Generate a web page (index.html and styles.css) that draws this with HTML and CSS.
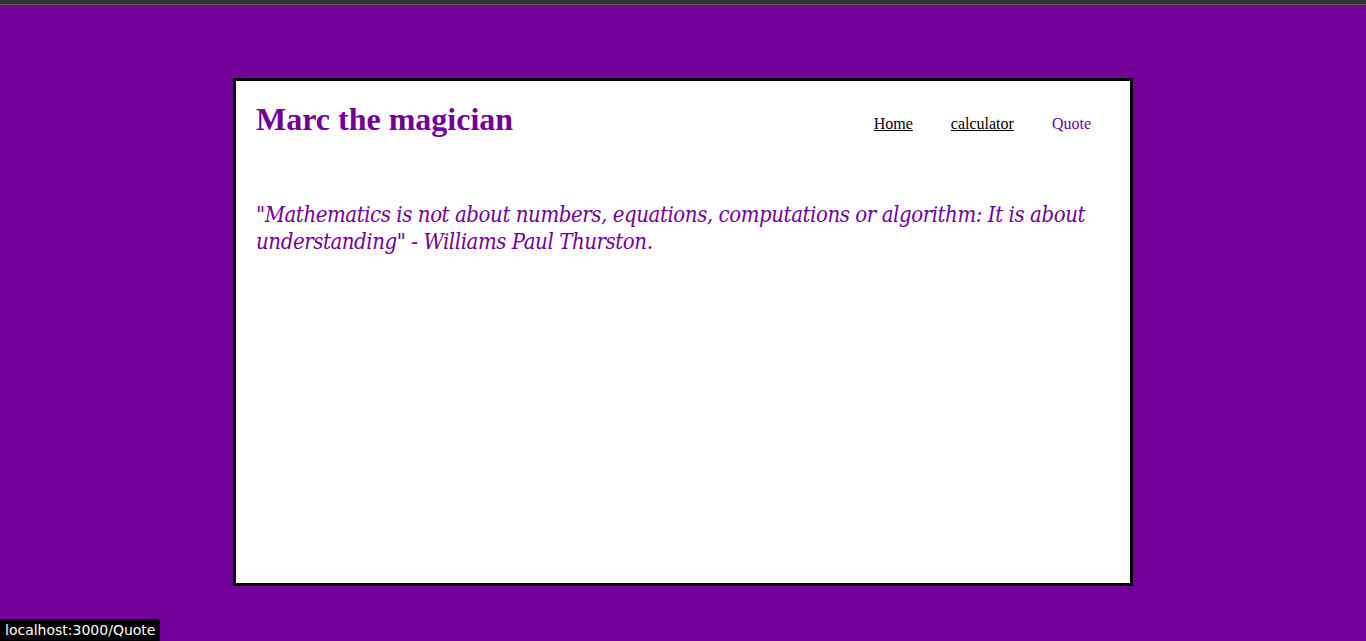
FILE: index.html
```html
<!DOCTYPE html>
<html>
<head>
<meta charset="utf-8">
<link rel="stylesheet" href="styles.css">
</head>
<body>
<div class="topbar"></div>
<main class="card">
  <header class="header">
    <h1 class="title">Marc the magician</h1>
    <nav class="nav">
      <a class="nav-link" href="#">Home</a>
      <a class="nav-link" href="#">calculator</a>
      <a class="nav-link active" href="#">Quote</a>
    </nav>
  </header>
  <p class="quote">"Mathematics is not about numbers, equations, computations or algorithm: It is about understanding" - Williams Paul Thurston.</p>
</main>
<div class="status">localhost:3000/Quote</div>
</body>
</html>
```
FILE: styles.css
```css
html, body {
  margin: 0;
  padding: 0;
}
body {
  background: #720098;
  height: 641px;
  overflow: hidden;
  font-family: "Liberation Serif", serif;
}
.topbar {
  height: 4px;
  background: #323232;
  border-bottom: 1px solid #5a5a5a;
}
.card {
  box-sizing: border-box;
  width: 900px;
  height: 508px;
  margin: 73px auto 0;
  background: #fff;
  border: 3px solid #000;
  padding: 18px 20px;
}
.header {
  display: flex;
  justify-content: space-between;
  align-items: flex-start;
}
.title {
  margin: 0;
  font-size: 32px;
  font-weight: bold;
  color: #720098;
  line-height: 40px;
}
.nav {
  display: flex;
  gap: 38px;
  padding-top: 16px;
  padding-right: 19px;
  font-size: 16px;
}
.nav-link {
  color: #000;
  text-decoration: underline;
}
.nav-link.active {
  color: #720098;
  text-decoration: none;
}
.quote {
  margin: 62px 0 0;
  font-family: "DejaVu Serif", serif;
  font-stretch: condensed;
  font-style: italic;
  font-size: 22px;
  letter-spacing: -0.43px;
  line-height: 27px;
  color: #720098;
}
.status {
  position: fixed;
  left: 0;
  bottom: 0;
  background: #000;
  color: #fff;
  font-family: "DejaVu Sans", sans-serif;
  font-size: 14px;
  line-height: 22px;
  padding: 0 5px;
  border-top-right-radius: 3px;
}
```
